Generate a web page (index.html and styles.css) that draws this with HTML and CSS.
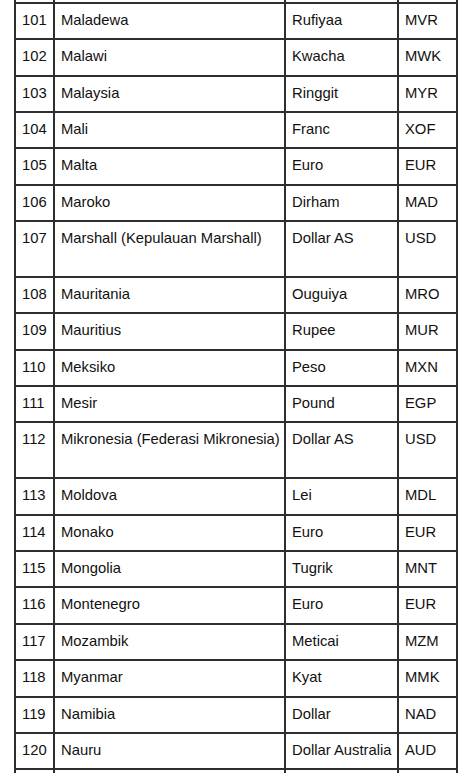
FILE: index.html
```html
<!DOCTYPE html>
<html lang="id">
<head>
<meta charset="utf-8">
<title>Daftar Mata Uang</title>
<link rel="stylesheet" href="styles.css">
</head>
<body>
<table class="currency">
  <colgroup>
    <col class="c-no">
    <col class="c-country">
    <col class="c-name">
    <col class="c-code">
  </colgroup>
  <tbody>
    <tr class="stub-top"><td></td><td></td><td></td><td></td></tr>
    <tr><td>101</td><td>Maladewa</td><td>Rufiyaa</td><td>MVR</td></tr>
    <tr><td>102</td><td>Malawi</td><td>Kwacha</td><td>MWK</td></tr>
    <tr><td>103</td><td>Malaysia</td><td>Ringgit</td><td>MYR</td></tr>
    <tr><td>104</td><td>Mali</td><td>Franc</td><td>XOF</td></tr>
    <tr><td>105</td><td>Malta</td><td>Euro</td><td>EUR</td></tr>
    <tr><td>106</td><td>Maroko</td><td>Dirham</td><td>MAD</td></tr>
    <tr class="tall"><td>107</td><td>Marshall (Kepulauan Marshall)</td><td>Dollar AS</td><td>USD</td></tr>
    <tr><td>108</td><td>Mauritania</td><td>Ouguiya</td><td>MRO</td></tr>
    <tr><td>109</td><td>Mauritius</td><td>Rupee</td><td>MUR</td></tr>
    <tr><td>110</td><td>Meksiko</td><td>Peso</td><td>MXN</td></tr>
    <tr><td>111</td><td>Mesir</td><td>Pound</td><td>EGP</td></tr>
    <tr class="tall"><td>112</td><td>Mikronesia (Federasi Mikronesia)</td><td>Dollar AS</td><td>USD</td></tr>
    <tr><td>113</td><td>Moldova</td><td>Lei</td><td>MDL</td></tr>
    <tr><td>114</td><td>Monako</td><td>Euro</td><td>EUR</td></tr>
    <tr><td>115</td><td>Mongolia</td><td>Tugrik</td><td>MNT</td></tr>
    <tr><td>116</td><td>Montenegro</td><td>Euro</td><td>EUR</td></tr>
    <tr><td>117</td><td>Mozambik</td><td>Meticai</td><td>MZM</td></tr>
    <tr><td>118</td><td>Myanmar</td><td>Kyat</td><td>MMK</td></tr>
    <tr><td>119</td><td>Namibia</td><td>Dollar</td><td>NAD</td></tr>
    <tr><td>120</td><td>Nauru</td><td>Dollar Australia</td><td>AUD</td></tr>
    <tr class="stub-bottom"><td></td><td></td><td></td><td></td></tr>
  </tbody>
</table>
</body>
</html>
```

FILE: styles.css
```css
html, body {
  margin: 0;
  padding: 0;
  background: #ffffff;
}

body {
  overflow: hidden;
  height: 773px;
}

.currency {
  margin-left: 14px;
  width: 444px;
  table-layout: fixed;
  border-collapse: separate;
  border-spacing: 0;
  border-left: 2px solid #2e2e2e;
  font-family: "Liberation Sans", Arial, sans-serif;
  font-size: 14.8px;
  line-height: 17px;
  color: #111111;
}

.c-no { width: 39px; }
.c-country { width: 231px; }
.c-name { width: 113px; }
.c-code { width: 59px; }

.currency td {
  box-sizing: border-box;
  height: 36.35px;
  padding: 8px 2px 0 6px;
  vertical-align: top;
  white-space: nowrap;
  overflow: hidden;
  border-right: 2px solid #2e2e2e;
  border-bottom: 2px solid #2e2e2e;
}

.currency .tall td {
  height: 56px;
}

.currency .stub-top td {
  height: 4px;
  padding: 0;
}

.currency .stub-bottom td {
  height: 20px;
  padding: 0;
  border-bottom: none;
}
```
